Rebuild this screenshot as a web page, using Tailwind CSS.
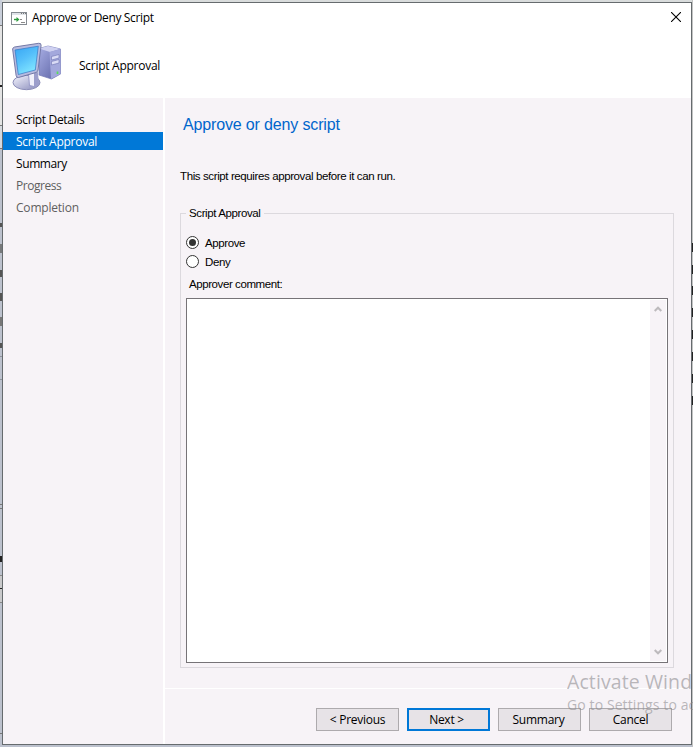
<!DOCTYPE html>
<html lang="en">
<head>
<meta charset="utf-8">
<title>Approve or Deny Script</title>
<script src="https://cdn.jsdelivr.net/npm/@tailwindcss/browser@4"></script>
</head>
<body class="relative h-[747px] w-[693px] overflow-hidden bg-[#bcc1cd] pt-[2px] pl-[2px] font-['Open_Sans',sans-serif] text-[12px] leading-4 text-black">
<!-- Desktop slivers behind the dialog -->
<div class="absolute inset-x-0 top-0 h-[2px] bg-[#d9dcdc]"></div>
<div class="absolute top-0 left-0 h-full w-[2px] overflow-hidden">
  <div class="absolute top-0 h-[25px] w-[2px] bg-[#c9cfda]"></div>
  <div class="absolute top-[25px] h-[100px] w-[2px] border-t border-[#777] bg-[#e4e4e4]"></div>
  <div class="absolute top-[85px] h-[2px] w-[2px] bg-[#222]"></div>
  <div class="absolute top-[125px] h-[24px] w-[2px] border-y border-[#777] bg-[#d5d9df]"></div>
  <div class="absolute top-[223px] h-[4px] w-[2px] bg-[#555]"></div>
  <div class="absolute top-[244px] h-[9px] w-[2px] bg-[#77797b]"></div>
  <div class="absolute top-[270px] h-[7px] w-[2px] bg-[#555]"></div>
  <div class="absolute top-[293px] h-[8px] w-[2px] bg-[#555]"></div>
  <div class="absolute top-[317px] h-[9px] w-[2px] bg-[#777]"></div>
  <div class="absolute top-[343px] h-[5px] w-[2px] bg-[#555]"></div>
  <div class="absolute top-[356px] h-[24px] w-[2px] border-y border-[#8f949d]"></div>
  <div class="absolute top-[504px] h-[5px] w-[2px] border-y border-[#777]"></div>
  <div class="absolute top-[556px] h-[6px] w-[2px] bg-[#222]"></div>
  <div class="absolute top-[575px] h-[28px] w-[2px] border-y border-[#888] bg-[#c9c9cb]"></div>
  <div class="absolute top-[588px] h-px w-[2px] bg-[#222]"></div>
  <div class="absolute top-[733px] h-px w-[2px] bg-[#777]"></div>
</div>
<div class="absolute top-0 right-0 h-full w-px bg-[#c3c4c4]">
  <div class="absolute top-[243px] h-[9px] w-px bg-[#222]"></div>
  <div class="absolute top-[265px] h-[9px] w-px bg-[#222]"></div>
  <div class="absolute top-[286px] h-[9px] w-px bg-[#222]"></div>
  <div class="absolute top-[308px] h-[9px] w-px bg-[#222]"></div>
  <div class="absolute top-[330px] h-[9px] w-px bg-[#222]"></div>
  <div class="absolute top-[352px] h-[9px] w-px bg-[#222]"></div>
  <div class="absolute top-[374px] h-[9px] w-px bg-[#222]"></div>
  <div class="absolute top-[396px] h-[9px] w-px bg-[#222]"></div>
</div>

<main class="relative flex h-[743px] w-[690px] flex-col border border-[#666b6e] bg-[#f7f3f7]">
  <header class="h-[95px] bg-white">
    <div class="flex h-[30px] items-center pl-[8px]">
      <svg class="mt-px h-[13px] w-[16px]" viewBox="0 0 16 13"><rect x=".5" y=".5" width="15" height="12" fill="#fff" stroke="#858b92"/><path d="M1 1h14v2H1z" fill="#dfe3e8"/><path d="M10 1.500h1M12 1.500h1M14 1.500h1" stroke="#777"/><path d="M3 7.500h3.500" stroke="#2a9a3a" stroke-width="1.400"/><path d="M5.500 5l3 2.500-3 2.500z" fill="#2a9a3a"/><path d="M9 7.500h2M10 10.500h4" stroke="#8a8a8a"/></svg>
      <h1 class="ml-[5px] tracking-[-0.35px] whitespace-nowrap">Approve or Deny Script</h1>
      <svg class="mr-[10px] ml-auto h-[10px] w-[10px] -translate-y-px" viewBox="0 0 10 10"><path d="M0 0l10 10M10 0L0 10" stroke="#000" stroke-width="1.1"/></svg>
    </div>
    <div class="flex h-[65px] pl-[9px]">
      <svg class="mt-[9px] h-[49px] w-[50px]" viewBox="0 0 50 49">
        <defs>
          <linearGradient id="screen" x1="0" y1="0" x2=".5" y2="1"><stop stop-color="#35a5f3"/><stop offset=".5" stop-color="#55bffa"/><stop offset="1" stop-color="#7fe4ff"/></linearGradient>
          <linearGradient id="side" x1="0" y1="0" x2="1" y2="1"><stop stop-color="#a8aee4"/><stop offset="1" stop-color="#5960a2"/></linearGradient>
          <linearGradient id="base" x1="0" y1="0" x2="1" y2="1"><stop stop-color="#f6f6ff"/><stop offset="1" stop-color="#8588b8"/></linearGradient>
        </defs>
        <path d="M27 6.500l9-2.500 12.500 3v25l-9 5L27 33z" fill="url(#side)" stroke="#7378b4" stroke-width=".7"/>
        <path d="M27 6.500l9-2.500 12.500 3L38 10z" fill="#cfd1f1"/>
        <path d="M37.500 10l11-3v25l-9.500 5z" fill="#a3a8dc"/>
        <path d="M39.500 14.500l7.500-2v3.500l-7.500 2zM39.500 19.500l7.500-2V21l-7.500 2z" fill="#d9dbf5" stroke="#6e74b3" stroke-width=".6"/>
        <path d="M45.500 29.500v2.500" stroke="#56df57" stroke-width="1.700"/>
        <ellipse cx="14.500" cy="40.500" rx="13.500" ry="7.200" fill="url(#base)" stroke="#8b8db8"/>
        <path d="M16 32l10-2 1 13q-5 4-10 1z" fill="#9c9ecb"/><path d="M17 32l5-1v13l-4-1z" fill="#f1f1fb"/>
        <path d="M.6 7Q.8 5.600 2.500 5L26.500 1.300q2.800-.4 2.600 2L26 28q-.3 2-2 2.500L6.500 35.500q-2 .3-2.400-2z" fill="#b7bbdf" stroke="#6a6f9f" stroke-width=".9"/>
        <path d="M3 8l23.300-3.800L23.300 28 6.300 32.500z" fill="url(#screen)" stroke="#3577c4" stroke-width=".7"/>
      </svg>
      <h2 class="mt-[25px] ml-[17px] tracking-[-0.27px] whitespace-nowrap">Script Approval</h2>
    </div>
  </header>

  <div class="flex min-h-0 flex-1">
    <nav class="w-[160px] shrink-0 pt-[12px] whitespace-nowrap">
      <div class="h-[18px] pl-[13px] leading-[20px] tracking-[-0.35px]">Script Details</div>
      <div class="mt-[4px] h-[18px] bg-[#0078d7] pl-[13px] leading-[20px] tracking-[-0.27px] text-white">Script Approval</div>
      <div class="mt-[4px] h-[18px] pl-[13px] leading-[20px] tracking-[-0.4px]">Summary</div>
      <div class="mt-[4px] h-[18px] pl-[13px] leading-[20px] tracking-[-0.45px] text-[#5f5f5f]">Progress</div>
      <div class="mt-[4px] h-[18px] pl-[13px] leading-[20px] tracking-[-0.2px] text-[#5f5f5f]">Completion</div>
    </nav>
    <div class="w-[2px] shrink-0 bg-white"></div>
    <section class="flex min-w-0 flex-1 flex-col font-['Liberation_Sans',Arial,sans-serif] text-[11.5px]">
      <h3 class="mt-[17px] ml-[18px] h-[19px] text-[16px] leading-[20px] tracking-[-0.15px] whitespace-nowrap text-[#0066cc]">Approve or deny script</h3>
      <p class="mt-[34px] ml-[15px] h-[16px] tracking-[-0.39px] whitespace-nowrap">This script requires approval before it can run.</p>
      <fieldset class="mt-[21px] ml-[15px] h-[463px] w-[494px] border border-[#dcd9de] pl-[5px]">
        <legend class="h-[16px] px-[3px] leading-[16px] tracking-[-0.39px] whitespace-nowrap">Script Approval</legend>
        <div class="mt-[12px] flex h-[18px] items-center gap-[6px]"><svg class="size-[13px]" viewBox="0 0 13 13"><circle cx="6.500" cy="6.500" r="6" fill="#fff" stroke="#333"/><circle cx="6.500" cy="6.500" r="3.500" fill="#333"/></svg><span class="pt-px tracking-[-0.39px]">Approve</span></div>
        <div class="mt-px flex h-[18px] items-center gap-[6px]"><svg class="size-[13px]" viewBox="0 0 13 13"><circle cx="6.500" cy="6.500" r="6" fill="#fff" stroke="#333"/></svg><span class="pt-px tracking-[-0.39px]">Deny</span></div>
        <div class="mt-[6px] ml-[3px] h-[16px] tracking-[-0.42px] whitespace-nowrap">Approver comment:</div>
        <div class="mt-[6px] flex h-[365px] w-[482px] justify-end border border-[#767377] bg-white p-px">
          <div class="flex w-[16px] flex-col items-center justify-between bg-[#f7f3f7] py-[6px] pr-px">
            <svg class="h-[6px] w-[8px]" viewBox="0 0 8 6"><path d="M.7 5L4 1.700 7.300 5" fill="none" stroke="#bdbabd" stroke-width="2"/></svg>
            <svg class="h-[6px] w-[8px]" viewBox="0 0 8 6"><path d="M.7 1L4 4.300 7.300 1" fill="none" stroke="#bdbabd" stroke-width="2"/></svg>
          </div>
        </div>
      </fieldset>
      <div class="mt-[20px] h-px bg-white"></div>
      <footer class="mt-[19px] flex gap-[8px] pl-[151px] font-['Open_Sans',sans-serif] text-[12px] tracking-[-0.27px] whitespace-nowrap">
        <button class="h-[23px] w-[83px] border border-[#adaaad] bg-[#e7e3e7]">&lt; Previous</button>
        <button class="h-[23px] w-[83px] border-2 border-[#0078d7] bg-[#e7e3e7] pr-1">Next &gt;</button>
        <button class="h-[23px] w-[83px] border border-[#adaaad] bg-[#e7e3e7] pr-0.5">Summary</button>
        <button class="h-[23px] w-[83px] border border-[#adaaad] bg-[#e7e3e7]">Cancel</button>
      </footer>
    </section>
  </div>
</main>

<!-- Activation watermark drawn over the desktop -->
<div class="pointer-events-none absolute top-[669px] right-0 left-[567px] overflow-hidden whitespace-nowrap text-[#8e8c90]/60">
  <div class="h-[26px] text-[19.5px] leading-[26px] tracking-[0.1px]">Activate Windows</div>
  <div class="h-[20px] text-[14px] leading-[20px] tracking-[0.1px]">Go to Settings to activate Windows.</div>
</div>
</body>
</html>
